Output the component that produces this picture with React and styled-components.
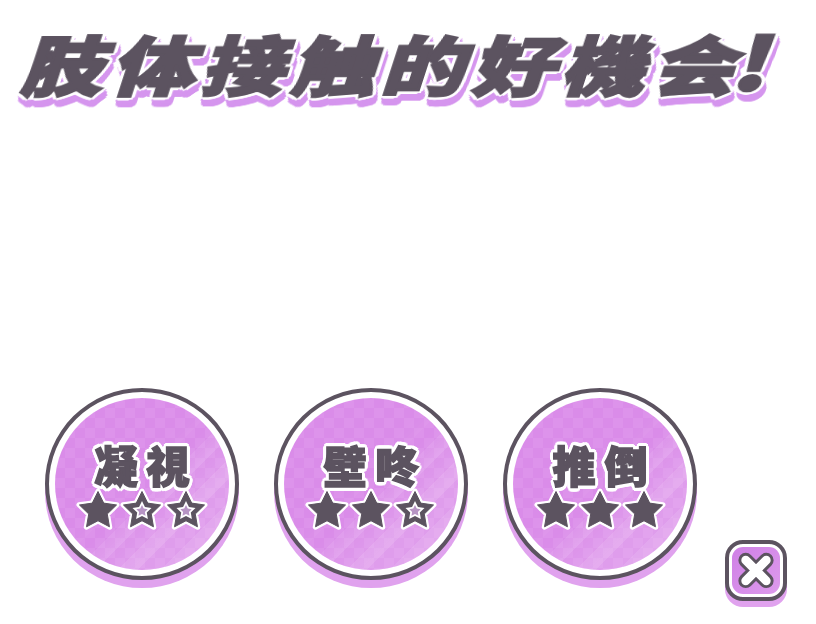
import React from "react";
import styled, { createGlobalStyle } from "styled-components";

const dark = "#5c5360";
const CJK = '"Noto Sans CJK TC", "Noto Sans CJK SC", sans-serif';

const GlobalStyle = createGlobalStyle`
  html, body { margin: 0; padding: 0; background: #fff; }
`;

// ring of offsets used as a text outline
const ring = (r, color, dx = 0, dy = 0) => {
  const out = [];
  for (let i = 0; i < 16; i++) {
    const a = (i / 16) * Math.PI * 2;
    out.push(`${(dx + Math.cos(a) * r).toFixed(2)}px ${(dy + Math.sin(a) * r).toFixed(2)}px 0 ${color}`);
  }
  return out.join(", ");
};

const starPath = (r, inner = 0.5) => {
  let d = "";
  for (let i = 0; i < 10; i++) {
    const a = -Math.PI / 2 + (i * Math.PI) / 5;
    const l = i % 2 ? r * inner : r;
    d += `${i ? "L" : "M"}${(22 + Math.cos(a) * l).toFixed(2)} ${(23 + Math.sin(a) * l).toFixed(2)} `;
  }
  return d + "Z";
};

const Star = ({ filled }) => (
  <StarSvg viewBox="0 0 44 44">
    <path d={starPath(20)} fill="#fff" stroke="#fff" strokeWidth="5" strokeLinejoin="round" />
    <path d={starPath(19.5)} fill={dark} stroke={dark} strokeWidth="1" strokeLinejoin="round" />
    {!filled && (
      <>
        <path d={starPath(10)} fill="#fff" />
        <path d={starPath(6)} fill="#b795c4" />
      </>
    )}
  </StarSvg>
);

const Choice = ({ label, stars }) => (
  <RoundButton>
    <Disc>
      <Label>{label}</Label>
      <Stars>
        {[0, 1, 2].map((i) => <Star key={i} filled={i < stars} />)}
      </Stars>
    </Disc>
  </RoundButton>
);

export default function App() {
  return (
    <Page>
      <GlobalStyle />
      <Title>肢体接触的好機会<Bang>!</Bang></Title>
      <Footer>
        <Choices>
          <Choice label="凝視" stars={1} />
          <Choice label="壁咚" stars={2} />
          <Choice label="推倒" stars={3} />
        </Choices>
        <CloseButton>
          <CloseFace viewBox="0 0 48 48">
            <path d="M13.5 13.5 L34.5 34.5 M34.5 13.5 L13.5 34.5" stroke={dark} strokeWidth="15" strokeLinecap="round" />
            <path d="M13.5 13.5 L34.5 34.5 M34.5 13.5 L13.5 34.5" stroke="#fff" strokeWidth="9" strokeLinecap="round" />
          </CloseFace>
        </CloseButton>
      </Footer>
    </Page>
  );
}

const Page = styled.div`
  width: 816px;
  height: 624px;
  display: flex;
  flex-direction: column;
  justify-content: space-between;
  overflow: hidden;
  background: #fff;
`;

const Title = styled.h1`
  margin: 17px 0 0 30px;
  height: 84px;
  width: 580px;
  white-space: nowrap;
  font: 900 64px/84px ${CJK};
  letter-spacing: 5.3px;
  color: ${dark};
  transform: skewX(-18deg) scaleX(1.3);
  transform-origin: left center;
  -webkit-text-stroke: 2.4px ${dark};
  text-shadow: ${ring(3.8, "#fff")}, ${ring(3.5, "#d595ee", 3, 7)}, ${ring(3.5, "#d595ee", 2, 4)};
  filter: blur(0.4px);
`;

const Bang = styled.span`
  font-size: 72px;
  font-weight: 900;
  margin-left: -9px;
`;

const Footer = styled.div`
  display: flex;
  align-items: flex-end;
  padding: 0 29px 23px 45px;
`;

const Choices = styled.div`
  display: flex;
  gap: 35px;
  margin-bottom: 21px;
  flex: 1;
`;

const RoundButton = styled.div`
  width: 194px;
  height: 192px;
  box-sizing: border-box;
  border-radius: 50%;
  border: 4px solid ${dark};
  background: #fff;
  padding: 6px;
  box-shadow: 0 8px 0 #e0a2ee;
`;

const Disc = styled.div`
  position: relative;
  width: 100%;
  height: 100%;
  overflow: hidden;
  border-radius: 50%;
  display: flex;
  flex-direction: column;
  align-items: center;
  padding-top: 42px;
  box-sizing: border-box;
  background: repeating-conic-gradient(#da8ce9 0 25%, #dd93eb 0 50%) 0 0 / 20px 20px;
  &::before {
    content: "";
    position: absolute;
    inset: 0;
    background:
      linear-gradient(135deg, transparent 50%, rgba(255, 255, 255, 0.15) 72%),
      repeating-linear-gradient(135deg, transparent 0 16px, rgba(255, 255, 255, 0.1) 16px 30px);
    mask-image: linear-gradient(135deg, transparent 42%, #000 62%);
  }
`;

const Label = styled.div`
  position: relative;
  font: 900 43px/48px ${CJK};
  letter-spacing: 9px;
  margin-right: -9px;
  color: ${dark};
  -webkit-text-stroke: 1.6px ${dark};
  text-shadow: ${ring(3.8, "#fff")};
  filter: blur(0.3px);
`;

const Stars = styled.div`
  position: relative;
  display: flex;
  margin-top: 0;
  filter: blur(0.3px);
`;

const StarSvg = styled.svg`
  width: 44px;
  height: 44px;
  display: block;
  overflow: visible;
`;

const CloseButton = styled.div`
  width: 62px;
  height: 61px;
  box-sizing: border-box;
  border: 4px solid ${dark};
  border-radius: 18px;
  background: #fff;
  padding: 3px;
  box-shadow: 0 6px 0 #e0a2ee;
  display: flex;
`;

const CloseFace = styled.svg`
  display: block;
  width: 100%;
  height: 100%;
  border-radius: 11px;
  background: linear-gradient(135deg, #cf80e6, #dd9aec);
`;
